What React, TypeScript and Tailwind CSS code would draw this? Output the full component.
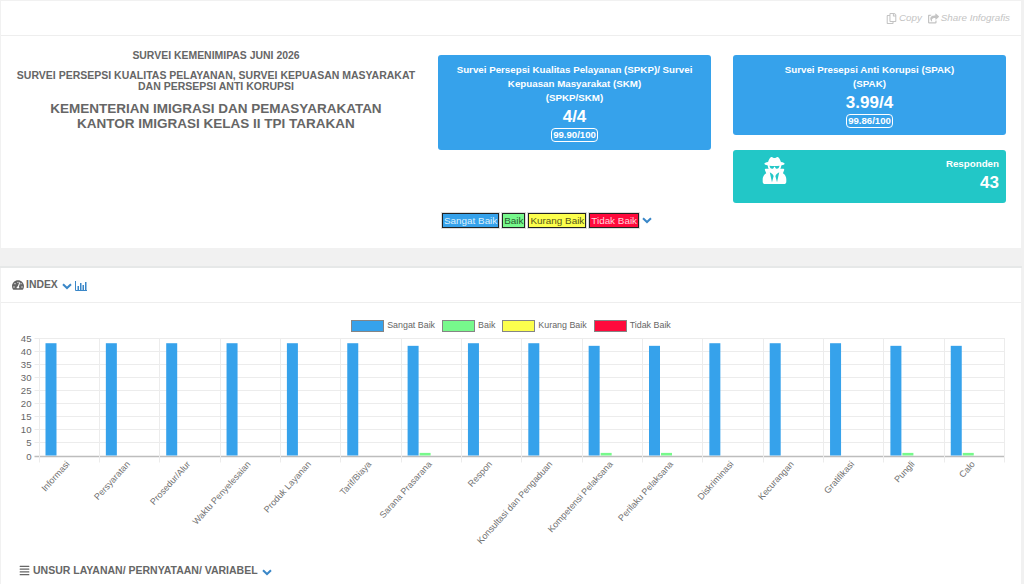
import React from "react";
import { FaRegCopy, FaShareSquare, FaUserSecret, FaTachometerAlt, FaAlignJustify } from "react-icons/fa";

const cats: [string, number, number][] = [
  ["Informasi", 43, 0], ["Persyaratan", 43, 0], ["Prosedur/Alur", 43, 0], ["Waktu Penyelesaian", 43, 0],
  ["Produk Layanan", 43, 0], ["Tarif/Biaya", 43, 0], ["Sarana Prasarana", 42, 1], ["Respon", 43, 0],
  ["Konsultasi dan Pengaduan", 43, 0], ["Kompetensi Pelaksana", 42, 1], ["Perilaku Pelaksana", 42, 1],
  ["Diskriminasi", 43, 0], ["Kecurangan", 43, 0], ["Gratifikasi", 43, 0], ["Pungli", 42, 1], ["Calo", 42, 1],
];
const X0 = 38.5, STEP = 60.35, Y0 = 122.5, YS = 117.5 / 45;

function Chev({ w = 10 }: { w?: number }) {
  return (
    <svg width={w} height={w * 0.7} viewBox="0 0 10 7" className="shrink-0">
      <polyline points="1,1.2 5,5 9,1.2" fill="none" stroke="#3a87c8" strokeWidth="2" />
    </svg>
  );
}

function Chart() {
  const ticks = [45, 40, 35, 30, 25, 20, 15, 10, 5, 0];
  return (
    <svg width="1020" height="235" className="block" style={{ fontFamily: '"Liberation Sans", Arial, sans-serif' }}>
      {ticks.map((t) => {
        const y = Math.round(Y0 - t * YS) + 0.5;
        return (
          <g key={t}>
            <line x1={X0 - 5} x2={1003} y1={y} y2={y} stroke={t === 0 ? "#bdbdbd" : "#ececec"} strokeWidth={t === 0 ? 1.3 : 1} />
            <text x={30.5} y={y + 3.5} textAnchor="end" fontSize="9.6" fill="#666">{t}</text>
          </g>
        );
      })}
      {Array.from({ length: 17 }).map((_, i) => {
        const x = Math.round(X0 + i * STEP) - 0.5;
        return <line key={i} x1={x} x2={x} y1={5} y2={Y0 + 7} stroke="#ececec" />;
      })}
      {cats.map(([name, a, b], i) => {
        const x = X0 + i * STEP + 6;
        const cx = X0 + i * STEP + STEP / 2;
        return (
          <g key={name}>
            <rect x={x} y={Y0 - a * YS} width={11} height={a * YS} fill="#36a2eb" />
            {b > 0 && <rect x={x + 12} y={Y0 - b * YS} width={11} height={b * YS} fill="#77f98c" />}
            <text transform={`translate(${cx + 0.5},${Y0 + 9}) rotate(-48)`} textAnchor="end" fontSize="9" fill="#707070">{name}</text>
          </g>
        );
      })}
    </svg>
  );
}

function Legend({ c, label }: { c: string; label: string }) {
  return (
    <div className="flex items-center gap-[3px]">
      <span className="w-[33px] h-[12px] border-[1.5px] border-[#858585]" style={{ background: c }} />
      <span>{label}</span>
    </div>
  );
}

function Pill({ c, fg, label }: { c: string; fg: string; label: string }) {
  return (
    <span className="inline-block h-[15px] leading-[14px] border border-[#222] px-[1px] text-[9.9px] outline outline-1 outline-[#ddd]" style={{ background: c, color: fg }}>{label}</span>
  );
}

export default function App() {
  return (
    <div className="w-[1024px] h-[584px] overflow-hidden bg-[#f1f1f1] font-['Liberation_Sans',Arial,sans-serif] text-[#666] pt-[1px] pl-[1px] pr-[3px]">
      <div className="bg-white h-[247px]">
        <div className="h-[35px] border-b border-[#eee] flex justify-end items-center pr-[11px] gap-[6px] pt-[1px] text-[9.8px] italic text-[#c4c4c4]">
          <span className="flex items-center gap-[2px]"><FaRegCopy className="text-[11px]" />Copy</span>
          <span className="flex items-center gap-[2px]"><FaShareSquare className="text-[11px]" />Share Infografis</span>
        </div>
        <div className="flex">
          <div className="w-[430px] text-center font-bold pt-[13px]">
            <div className="text-[10.45px] leading-[13px]">SURVEI KEMENIMIPAS JUNI 2026</div>
            <div className="text-[10.5px] leading-[11px] mt-[8px]">SURVEI PERSEPSI KUALITAS PELAYANAN, SURVEI KEPUASAN MASYARAKAT<br />DAN PERSEPSI ANTI KORUPSI</div>
            <div className="text-[13.5px] leading-[15px] mt-[9px]">KEMENTERIAN IMIGRASI DAN PEMASYARAKATAN<br />KANTOR IMIGRASI KELAS II TPI TARAKAN</div>
          </div>
          <div className="w-[302px] pl-[7px] pt-[19px]">
            <div className="w-[273px] h-[95px] bg-[#36a2eb] rounded-[3px] text-white text-center font-bold pt-[8px]">
              <div className="text-[9.75px] leading-[14px] px-[16px]">Survei Persepsi Kualitas Pelayanan (SPKP)/ Survei Kepuasan Masyarakat (SKM)<br />(SPKP/SKM)</div>
              <div className="text-[17px] leading-[20px] mt-[2px]">4/4</div>
              <div className="w-fit mx-auto border border-white rounded-[4px] text-[9.6px] leading-[12px] px-[1px] mt-[1px]">99.90/100</div>
            </div>
            <div className="flex items-center gap-[3px] mt-[63px] pl-[4px]">
              <Pill c="#36a2eb" fg="#dff1fc" label="Sangat Baik" />
              <Pill c="#77f98c" fg="#2a5a30" label="Baik" />
              <Pill c="#fcff4d" fg="#55561a" label="Kurang Baik" />
              <Pill c="#ff0a3c" fg="#ffd5dc" label="Tidak Baik" />
              <Chev />
            </div>
          </div>
          <div className="w-[273px] pt-[19px]">
            <div className="h-[80px] bg-[#36a2eb] rounded-[3px] text-white text-center font-bold pt-[8px]">
              <div className="text-[9.75px] leading-[14px]">Survei Presepsi Anti Korupsi (SPAK)<br />(SPAK)</div>
              <div className="text-[17px] leading-[20px] mt-[2px]">3.99/4</div>
              <div className="w-fit mx-auto border border-white rounded-[4px] text-[9.6px] leading-[12px] px-[1px] mt-[1px]">99.86/100</div>
            </div>
            <div className="h-[53px] bg-[#22c7c7] rounded-[3px] mt-[15px] text-white font-bold flex justify-between pl-[28px] pr-[7px]">
              <FaUserSecret className="text-[27px] mt-[7px]" />
              <div className="text-right pt-[7px]">
                <div className="text-[9.75px] leading-[14px]">Responden</div>
                <div className="text-[17px] leading-[20px] mt-[2px]">43</div>
              </div>
            </div>
          </div>
        </div>
      </div>
      <div className="mt-[18px] h-[2px] bg-[#e6e8e8] -mx-[1px]" />
      <div className="bg-white h-[320px]">
        <div className="h-[35px] border-b border-[#eee] flex items-center pl-[11px] text-[10.4px] font-bold gap-[2px]">
          <FaTachometerAlt className="text-[12px]" />
          <span>INDEX</span>
          <span className="ml-[2px] mt-[3px]"><Chev /></span>
          <svg width="12" height="10" viewBox="0 0 12 10" className="ml-[1px] mt-[1px]">
            <path d="M.5 0v9.5H12" fill="none" stroke="#3a87c8" />
            <path d="M2.5 5h1.5v4H2.5zM5 2h1.5v7H5zM7.5 4H9v5H7.5zM10 1h1.5v8H10z" fill="#3a87c8" />
          </svg>
        </div>
        <div className="flex justify-center gap-[7px] text-[8.9px] mt-[15px] h-[15px]">
          <Legend c="#36a2eb" label="Sangat Baik" />
          <Legend c="#77f98c" label="Baik" />
          <Legend c="#fcff4d" label="Kurang Baik" />
          <Legend c="#ff0a3c" label="Tidak Baik" />
        </div>
        <Chart />
        <div className="flex items-center gap-[3px] pl-[18px] text-[10.5px] font-bold -mt-[5px]">
          <FaAlignJustify className="text-[11px]" />
          <span>UNSUR LAYANAN/ PERNYATAAN/ VARIABEL</span>
          <span className="ml-[1px] mt-[3px]"><Chev /></span>
        </div>
      </div>
    </div>
  );
}
